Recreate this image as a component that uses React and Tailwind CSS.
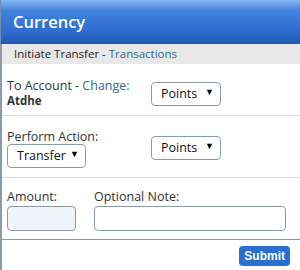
import { useState } from "react"

const Select = ({ value, options, className }) => (
    <div className={`relative ${className}`}>
        <select
            defaultValue={value}
            className="appearance-none w-full h-full border border-[#8c9aa6] rounded-[4px] bg-white pl-[9px] text-[12.5px] text-[#111] outline-none"
        >
            {options.map(o => <option key={o}>{o}</option>)}
        </select>
        <span className="absolute right-[7px] top-[5px] text-[9px] text-black pointer-events-none">▼</span>
    </div>
)

const App = () => {
    const [amount, setAmount] = useState('')
    const [note, setNote] = useState('')

    return (
        <div className="w-[300px] h-[270px] bg-white overflow-hidden text-[#333] font-['Open_Sans',sans-serif]">
            <div className="h-[44px] flex items-center pl-[12px] bg-[linear-gradient(#86b6f4_0%,#4182dc_25%,#2f6dd0_70%,#1f58b0_100%)] border-l border-[#6f8fb8]">
                <h1 className="text-white text-[16.5px] font-semibold pt-[1px]">Currency</h1>
            </div>
            <div className="h-[20px] flex items-center pl-[12px] bg-[#e8e8e8] text-[11.5px] text-[#222] border-l-2 border-[#8c9aab]">
                Initiate Transfer -&nbsp;<a className="text-[#336a8c]">Transactions</a>
            </div>

            <div className="border-l-2 border-[#8c9aab] h-[206px] flex flex-col">
                <div className="h-[52px] flex pl-[5px] pt-[14px] border-b border-[#d3dce2]">
                    <div className="w-[144px]">
                        <div className="text-[12.5px] leading-[15px] text-[#333]">To Account - <a className="text-[#336a8c]">Change:</a></div>
                        <div className="text-[11.5px] leading-[15px] font-bold text-[#333]">Atdhe</div>
                    </div>
                    <Select value="Points" options={["Points"]} className="w-[70px] h-[24px] mt-[2px]" />
                </div>

                <div className="h-[62px] flex pl-[5px] border-b border-[#d3dce2]">
                    <div className="w-[144px] pt-[14px]">
                        <div className="text-[12.5px] leading-[14px] text-[#333]">Perform Action:</div>
                        <Select value="Transfer" options={["Transfer"]} className="w-[79px] h-[24px] mt-[-2px]" />
                    </div>
                    <Select value="Points" options={["Points"]} className="w-[70px] h-[24px] mt-[18px]" />
                </div>

                <div className="h-[62px] flex pl-[5px] gap-[18px] pt-[11px] border-b border-[#8a9aaa]">
                    <div>
                        <div className="text-[12.5px] leading-[16px] text-[#333]">Amount:</div>
                        <input
                            value={amount}
                            onChange={e => setAmount(e.target.value)}
                            className="w-[69px] h-[25px] mt-[1px] border border-[#8c9aa6] rounded-[4px] bg-[#eef4fa] outline-none"
                        />
                    </div>
                    <div>
                        <div className="text-[12.5px] leading-[16px] text-[#333]">Optional Note:</div>
                        <input
                            value={note}
                            onChange={e => setNote(e.target.value)}
                            className="w-[192px] h-[25px] mt-[1px] border border-[#8c9aa6] rounded-[4px] bg-white outline-none"
                        />
                    </div>
                </div>

                <div className="flex justify-end pr-[10px] pt-[6px]">
                    <button className="h-[20px] px-[5px] rounded-[4px] bg-[#2a6fcf] text-white text-[12px] font-bold leading-[20px] font-['Liberation_Sans',sans-serif]">Submit</button>
                </div>
            </div>
        </div>
    )
}

export default App
